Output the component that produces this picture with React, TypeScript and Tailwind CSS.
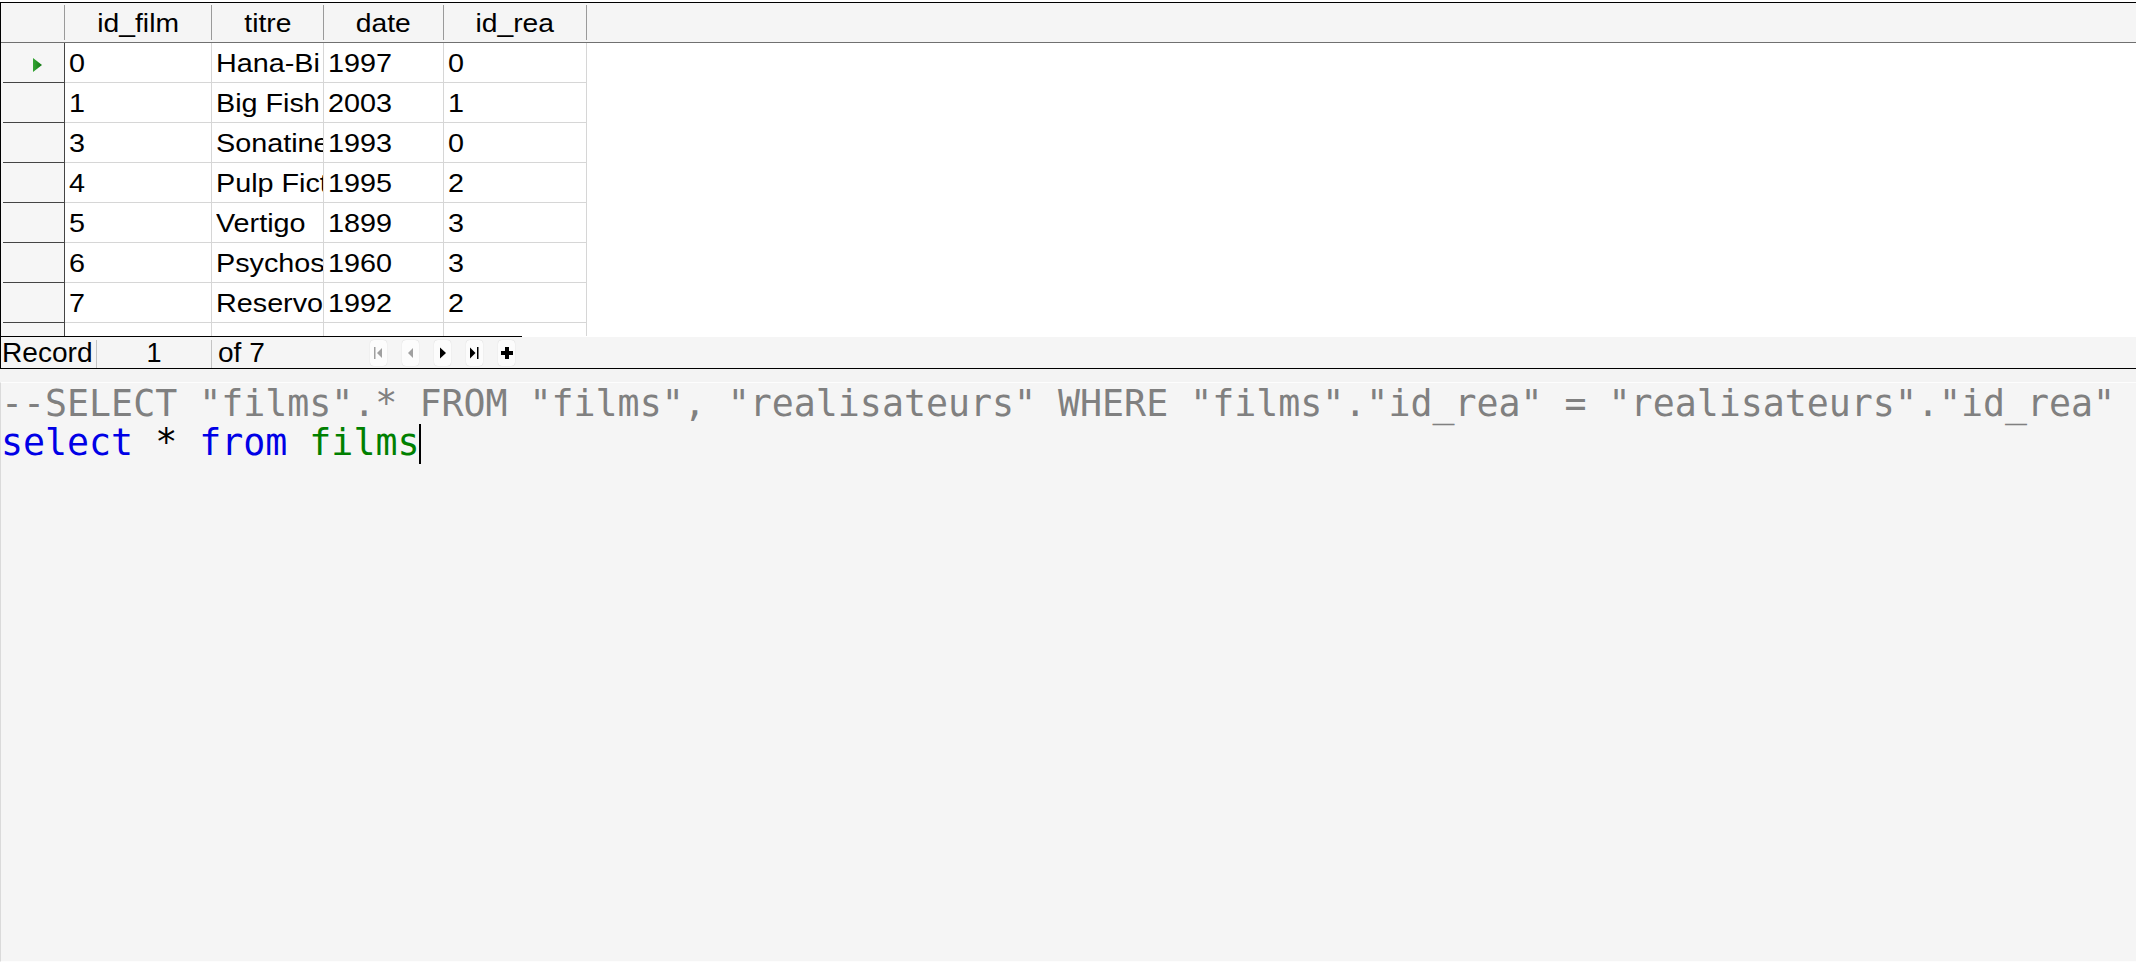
import React from 'react';

const rows = [
  ['0', 'Hana-Bi', '1997', '0'],
  ['1', 'Big Fish', '2003', '1'],
  ['3', 'Sonatine', '1993', '0'],
  ['4', 'Pulp Fiction', '1995', '2'],
  ['5', 'Vertigo', '1899', '3'],
  ['6', 'Psychose', '1960', '3'],
  ['7', 'Reservoir Dogs', '1992', '2'],
  ['', '', '', ''],
];

const colWidths = ['w-[147px]', 'w-[112px]', 'w-[120px]', 'w-[143px]'];

function HeadSep() {
  return <div className="my-[2px] w-px shrink-0 bg-[#9a9a9a]" />;
}

function HeadCell({ w, label }: { w: string; label: string }) {
  return (
    <div className={`${w} shrink-0 flex items-center justify-center pt-[3px] overflow-hidden`}>
      <span className="inline-block scale-x-[1.13]">{label}</span>
    </div>
  );
}

function Cell({ w, text }: { w: string; text: string }) {
  return (
    <div className={`${w} shrink-0 h-full border-r border-b border-[#d6d6d6] pl-[4px] pt-[2px] flex items-center overflow-hidden whitespace-nowrap`}>
      <span className="inline-block origin-left scale-x-[1.15]">{text}</span>
    </div>
  );
}

function NavButton({ children }: { children: React.ReactNode }) {
  return (
    <div className="mt-[3px] flex h-[26px] w-[17px] items-center justify-center rounded-[4px] bg-[#fcfcfc] shadow-[0_0_1px_rgba(0,0,0,0.2)]">
      {children}
    </div>
  );
}

export default function App() {
  return (
    <div className="flex h-[962px] w-[2136px] flex-col overflow-hidden bg-white font-['Liberation_Sans',Arial,sans-serif] text-[25px] text-black">
      <div className="h-[2px] shrink-0" />

      {/* Grid + record bar */}
      <div className="flex shrink-0 flex-col border-l border-t border-b border-black">
        {/* Column headers */}
        <div className="flex h-[40px] border-b border-[#707070] bg-[#f5f5f5]">
          <div className="w-[63px] shrink-0" />
          <HeadSep />
          <HeadCell w="w-[146px]" label="id_film" />
          <HeadSep />
          <HeadCell w="w-[111px]" label="titre" />
          <HeadSep />
          <HeadCell w="w-[119px]" label="date" />
          <HeadSep />
          <HeadCell w="w-[142px]" label="id_rea" />
          <HeadSep />
          <div className="flex-1" />
        </div>

        {/* Rows */}
        <div className="h-[293px] overflow-hidden">
          {rows.map((r, i) => (
            <div key={i} className="flex h-[40px]">
              <div className="w-[64px] shrink-0 bg-[#f6f6f6] pl-[2px]">
                <div className="flex h-full items-center border-b border-r border-[#454545] pl-[30px] pt-[5px]">
                  {i === 0 && (
                    <svg width="9" height="14" viewBox="0 0 9 14">
                      <defs>
                        <linearGradient id="tri" x1="0" y1="0" x2="1" y2="0">
                          <stop offset="0" stopColor="#35a635" />
                          <stop offset="1" stopColor="#127812" />
                        </linearGradient>
                      </defs>
                      <polygon points="0,0 9,7 0,14" fill="url(#tri)" />
                    </svg>
                  )}
                </div>
              </div>
              {r.map((t, j) => (
                <Cell key={j} w={colWidths[j]} text={t} />
              ))}
              <div className="flex-1" />
            </div>
          ))}
        </div>

        {/* Record navigation bar */}
        <div className="flex h-[32px]">
          <div className="flex w-[521px] shrink-0 border-t border-black bg-[#f5f5f5] text-[27px] leading-[32px]">
            <div className="w-[95px] shrink-0 overflow-hidden pl-[1px]">
              <span className="inline-block origin-left scale-x-[1.04]">Record</span>
            </div>
            <div className="mt-[3px] w-px shrink-0 bg-[#c4c4c4]" />
            <div className="w-[114px] shrink-0 text-center">1</div>
            <div className="mt-[3px] w-px shrink-0 bg-[#c4c4c4]" />
            <div className="w-[158px] shrink-0 pl-[6px]">
              <span className="inline-block origin-left scale-x-[1.04]">of 7</span>
            </div>
            <div className="flex gap-[15px]">
              <NavButton>
                <svg width="9" height="12" viewBox="0 0 9 12">
                  <rect x="0" y="0" width="1.5" height="12" fill="#a0a0a0" />
                  <polygon points="8,1 3,6 8,11" fill="#a0a0a0" />
                </svg>
              </NavButton>
              <NavButton>
                <svg width="6" height="12" viewBox="0 0 6 12">
                  <polygon points="5,1 0,6 5,11" fill="#a0a0a0" />
                </svg>
              </NavButton>
              <NavButton>
                <svg width="7" height="12" viewBox="0 0 7 12">
                  <polygon points="1,0.5 7,6 1,11.5" fill="#000" />
                </svg>
              </NavButton>
              <NavButton>
                <svg width="9" height="12" viewBox="0 0 9 12">
                  <polygon points="0,0.5 5.5,6 0,11.5" fill="#000" />
                  <rect x="7" y="0" width="1.5" height="12" fill="#000" />
                </svg>
              </NavButton>
              <NavButton>
                <svg width="12" height="12" viewBox="0 0 12 12">
                  <path d="M4 0h4v4h4v4H8v4H4V8H0V4h4z" fill="#000" />
                </svg>
              </NavButton>
            </div>
          </div>
          <div className="flex-1 border-t border-white bg-[#f5f5f5]" />
        </div>
      </div>

      {/* SQL editor */}
      <div className="h-[13px] shrink-0 bg-[#f3f3f3]" />
      <div className="flex-1 border-l border-t border-b border-l-[#dadada] border-t-[#fdfdfd] border-b-[#fdfdfd] bg-[#f5f5f5] pt-[1px] font-['DejaVu_Sans_Mono',monospace] text-[36.6px] leading-[39px] whitespace-pre">
        <div className="text-[#808080]">
          --SELECT "films".* FROM "films", "realisateurs" WHERE "films"."id_rea" = "realisateurs"."id_rea"
        </div>
        <div>
          <span className="text-[#0000e6]">select</span>
          <span> * </span>
          <span className="text-[#0000e6]">from</span>
          <span> </span>
          <span className="text-[#008000]">films</span>
          <span className="inline-block h-[40px] w-[2px] bg-black align-[-9px]" />
        </div>
      </div>
    </div>
  );
}
